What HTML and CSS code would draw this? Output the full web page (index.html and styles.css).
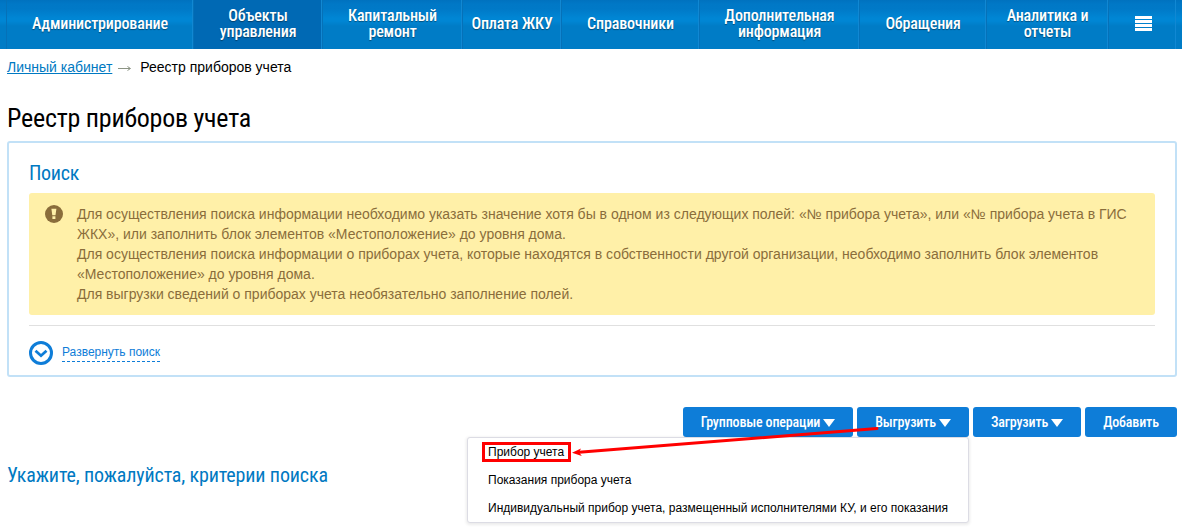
FILE: index.html
```
<!DOCTYPE html>
<html lang="ru">
<head>
    <meta charset="utf-8">
    <title>Реестр приборов учета</title>
    <link rel="stylesheet" href="styles.css">
</head>
<body>
    <nav class="menu">
        <a class="menu-item menu-admin"><span>Администрирование</span></a>
        <a class="menu-item menu-objects active"><span>Объекты<br>управления</span></a>
        <a class="menu-item menu-repair"><span>Капитальный<br>ремонт</span></a>
        <a class="menu-item menu-pay"><span>Оплата ЖКУ</span></a>
        <a class="menu-item menu-refs"><span>Справочники</span></a>
        <a class="menu-item menu-info"><span>Дополнительная<br>информация</span></a>
        <a class="menu-item menu-appeals"><span>Обращения</span></a>
        <a class="menu-item menu-reports"><span>Аналитика и<br>отчеты</span></a>
        <a class="menu-item menu-more">
            <svg width="17" height="15" viewBox="0 0 17 15"><path d="M0 0h17v3H0zM0 4h17v3H0zM0 8h17v3H0zM0 12h17v3H0z" fill="#fff"/></svg>
        </a>
    </nav>

    <div class="page">
        <div class="breadcrumbs">
            <a href="#">Личный кабинет</a>
            <svg class="crumb-arrow" width="13" height="7" viewBox="0 0 13 7"><path d="M0 3.5h12M9.5 1.5l3 2-3 2" fill="none" stroke="#8c9484"/></svg>
            <span>Реестр приборов учета</span>
        </div>

        <h1>Реестр приборов учета</h1>

        <section class="search">
            <h2>Поиск</h2>
            <div class="notice">
                <svg class="notice-icon" width="18" height="18" viewBox="0 0 18 18">
                    <circle cx="9" cy="9" r="9" fill="#8a6d3b"/>
                    <path d="M6.4 3.8h5l-.9 6.4H7.3zM7.4 11.3h3v2.7h-3z" fill="#fff0a8"/>
                </svg>
                <div class="notice-text">
                    Для осуществления поиска информации необходимо указать значение хотя бы в одном из следующих полей: «№ прибора учета», или «№ прибора учета в ГИС<br>
                    ЖКХ», или заполнить блок элементов «Местоположение» до уровня дома.<br>
                    Для осуществления поиска информации о приборах учета, которые находятся в собственности другой организации, необходимо заполнить блок элементов<br>
                    «Местоположение» до уровня дома.<br>
                    Для выгрузки сведений о приборах учета необязательно заполнение полей.
                </div>
            </div>
            <div class="expand">
                <svg width="24" height="24" viewBox="0 0 24 24">
                    <circle cx="12" cy="12" r="10.5" fill="none" stroke="#0e7dd8" stroke-width="3"/>
                    <path d="M6.5 9.8l5.5 4.9 5.5-4.9" fill="none" stroke="#0e7dd8" stroke-width="2.8"/>
                </svg>
                <a class="expand-link">Развернуть поиск</a>
            </div>
        </section>

        <div class="toolbar">
            <button class="btn btn-group"><span>Групповые операции</span><i class="caret"></i></button>
            <div class="dropdown">
                <button class="btn btn-export"><span>Выгрузить</span><i class="caret"></i></button>
                <ul class="dropdown-menu">
                    <li><span class="marked">Прибор учета</span></li>
                    <li>Показания прибора учета</li>
                    <li>Индивидуальный прибор учета, размещенный исполнителями КУ, и его показания</li>
                </ul>
                <svg class="pointer" width="310" height="36" viewBox="0 0 310 36">
                    <path d="M306 2.5L8 26.2" stroke="#f00" stroke-width="3" stroke-linecap="round"/>
                    <path d="M1 26.8l9-4.4-2 3.9 2.8 3.6z" fill="#f00"/>
                </svg>
            </div>
            <button class="btn btn-import"><span>Загрузить</span><i class="caret"></i></button>
            <button class="btn btn-add"><span>Добавить</span></button>
        </div>

        <p class="hint">Укажите, пожалуйста, критерии поиска</p>
    </div>
</body>
</html>
```
FILE: styles.css
```
* {
    box-sizing: border-box;
}

body {
    margin: 0;
    min-height: 531px;
    background: #fff;
    color: #000;
    font-family: "Liberation Sans", Arial, sans-serif;
    font-size: 14px;
}

/* Top menu */
.menu {
    display: flex;
    height: 49px;
    padding-left: 6px;
    background: linear-gradient(#0072bf 0, #0078c6 4px, #0079c7 9px, #0086d4 18px, #0086d4 21px, #007cc6 26px, #007cc6 100%);
}

.menu-item {
    display: flex;
    align-items: center;
    justify-content: center;
    padding: 0 0 2px 2px;
    border-right: 1px solid #1188d3;
    box-shadow: inset 1px 0 #0571b8;
    color: #fff;
    font-family: "Roboto Condensed", Roboto, sans-serif;
    font-stretch: condensed;
    font-size: 16px;
    line-height: 16px;
    font-weight: 500;
    letter-spacing: -0.15px;
    text-align: center;
    text-shadow: 0 1px 1px rgba(0, 0, 0, 0.4);
    white-space: nowrap;
}

.menu-item.active {
    background: #0069b4;
}

.menu-admin { width: 187px; }
.menu-objects { width: 129px; }
.menu-repair { width: 140px; }
.menu-pay { width: 99px; }
.menu-refs { width: 138px; }
.menu-info { width: 160px; }
.menu-appeals { width: 127px; }
.menu-reports { width: 122px; }
.menu-more { width: 68px; padding-left: 3px; }

.page {
    padding: 0 5px 0 7px;
}

.breadcrumbs {
    display: flex;
    align-items: center;
    height: 36px;
}

.breadcrumbs a {
    color: #0079c2;
}

.crumb-arrow {
    margin: 2px 9px 0 6px;
}

h1, h2, .hint {
    margin: 0;
    font-family: "Roboto Condensed", Roboto, sans-serif;
    font-stretch: condensed;
    font-weight: 400;
    white-space: nowrap;
}

h1 {
    margin-top: 17px;
    height: 39px;
    font-size: 26px;
    line-height: 32px;
    letter-spacing: -0.24px;
}

/* Search block */
.search {
    height: 236px;
    padding: 19px 20px 0;
    border: 2px solid #c2e1f7;
    border-radius: 3px;
}

h2 {
    height: 31px;
    font-size: 20px;
    line-height: 22px;
    letter-spacing: -0.3px;
    color: #0079c2;
}

.notice {
    display: flex;
    height: 122px;
    padding: 11px 16px;
    background: #fff0a8;
    border-radius: 3px;
    color: #8a6d3b;
    line-height: 20px;
    white-space: nowrap;
}

.notice-icon {
    flex: none;
    margin: 1px 14px 0 0;
}

.expand {
    display: flex;
    align-items: flex-start;
    margin-top: 10px;
    padding-top: 15px;
    border-top: 1px solid #e0e0e0;
}

.expand-link {
    margin: 4px 0 0 9px;
    padding-bottom: 1px;
    border-bottom: 1px dashed #0e7dd8;
    color: #0e7dd8;
    font-size: 12px;
    line-height: 15px;
}

/* Buttons */
.toolbar {
    display: flex;
    justify-content: flex-end;
    gap: 4px;
    margin-top: 30px;
}

.btn {
    display: flex;
    align-items: center;
    justify-content: center;
    height: 30px;
    padding: 0;
    border: 0;
    border-radius: 3px;
    background: #0e7dd8;
    color: #fff;
    font-family: "Roboto Condensed", Roboto, sans-serif;
    font-stretch: condensed;
    font-size: 14px;
    font-weight: 500;
    letter-spacing: -0.15px;
    white-space: nowrap;
}

.btn-group { width: 170px; }
.btn-export { width: 112px; }
.btn-import { width: 108px; }
.btn-add { width: 92px; }

.caret {
    margin: 2px 0 0 3px;
    border: 6px solid transparent;
    border-top: 8px solid #fff;
    border-bottom: 0;
}

.dropdown {
    position: relative;
}

.dropdown-menu {
    position: absolute;
    top: 30px;
    right: 0;
    width: 502px;
    height: 86px;
    margin: 0;
    padding: 0 0 0 20px;
    list-style: none;
    background: #fff;
    border: 1px solid #dcdce4;
    border-radius: 3px;
    box-shadow: 0 1px 3px 1px rgba(0, 0, 0, 0.08);
    font-size: 12px;
    line-height: 28px;
    white-space: nowrap;
}

.marked {
    display: inline-block;
    margin-left: -6px;
    padding: 0 4px 0 3px;
    border: 3px solid #f00;
    line-height: 14px;
}

/* Arrow from the button to the first menu entry */
.pointer {
    position: absolute;
    top: 19px;
    right: 88px;
}

.hint {
    margin-top: 26px;
    font-size: 20px;
    line-height: 24px;
    letter-spacing: -0.14px;
    color: #0079c2;
}
```
